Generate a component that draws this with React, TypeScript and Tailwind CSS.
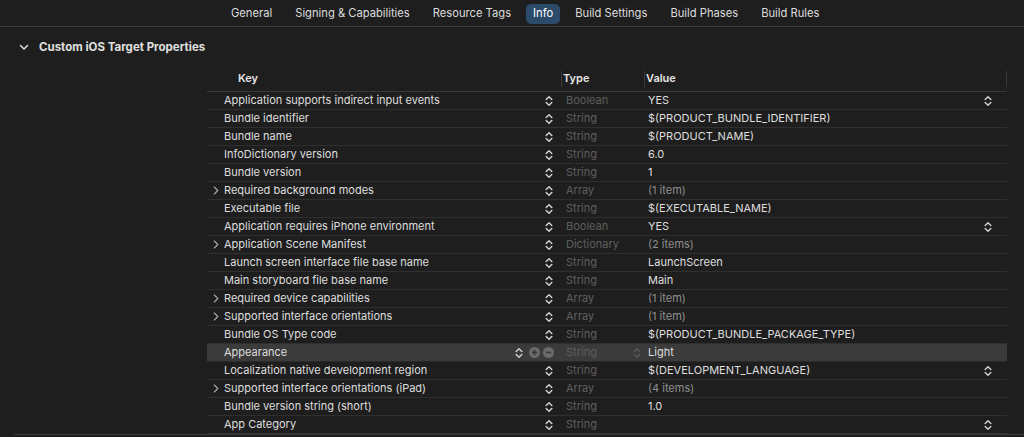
import React from "react";

type Row = {
  key: string;
  type: string;
  value: string;
  expandable?: boolean;
  dimValue?: boolean;
  valueStepper?: boolean;
  selected?: boolean;
};

const rows: Row[] = [
  { key: "Application supports indirect input events", type: "Boolean", value: "YES", valueStepper: true },
  { key: "Bundle identifier", type: "String", value: "$(PRODUCT_BUNDLE_IDENTIFIER)" },
  { key: "Bundle name", type: "String", value: "$(PRODUCT_NAME)" },
  { key: "InfoDictionary version", type: "String", value: "6.0" },
  { key: "Bundle version", type: "String", value: "1" },
  { key: "Required background modes", type: "Array", value: "(1 item)", expandable: true, dimValue: true },
  { key: "Executable file", type: "String", value: "$(EXECUTABLE_NAME)" },
  { key: "Application requires iPhone environment", type: "Boolean", value: "YES", valueStepper: true },
  { key: "Application Scene Manifest", type: "Dictionary", value: "(2 items)", expandable: true, dimValue: true },
  { key: "Launch screen interface file base name", type: "String", value: "LaunchScreen" },
  { key: "Main storyboard file base name", type: "String", value: "Main" },
  { key: "Required device capabilities", type: "Array", value: "(1 item)", expandable: true, dimValue: true },
  { key: "Supported interface orientations", type: "Array", value: "(1 item)", expandable: true, dimValue: true },
  { key: "Bundle OS Type code", type: "String", value: "$(PRODUCT_BUNDLE_PACKAGE_TYPE)" },
  { key: "Appearance", type: "String", value: "Light", selected: true },
  { key: "Localization native development region", type: "String", value: "$(DEVELOPMENT_LANGUAGE)", valueStepper: true },
  { key: "Supported interface orientations (iPad)", type: "Array", value: "(4 items)", expandable: true, dimValue: true },
  { key: "Bundle version string (short)", type: "String", value: "1.0" },
  { key: "App Category", type: "String", value: "", valueStepper: true },
];

const tabs = ["General", "Signing & Capabilities", "Resource Tags", "Info", "Build Settings", "Build Phases", "Build Rules"];

const Stepper = ({ className = "" }: { className?: string }) => (
  <svg width="8" height="12" viewBox="0 0 8 12" className={className} fill="none" stroke="currentColor" strokeWidth="1.5" strokeLinecap="round" strokeLinejoin="round">
    <path d="M1.2 4.5 L4 1.7 L6.8 4.5" />
    <path d="M1.2 7.5 L4 10.3 L6.8 7.5" />
  </svg>
);

const Disclosure = () => (
  <svg width="6" height="9" viewBox="0 0 6 9" fill="none" stroke="#a8a8a8" strokeWidth="1.1" strokeLinecap="round" strokeLinejoin="round">
    <path d="M1.3 1 L4.8 4.5 L1.3 8" />
  </svg>
);

const RoundBtn = ({ plus }: { plus?: boolean }) => (
  <svg width="11" height="11" viewBox="0 0 11 11">
    <circle cx="5.5" cy="5.5" r="5.5" fill="#6b6b6b" />
    <path d="M2.8 5.5 H8.2" stroke="#3a3a3a" strokeWidth="1.6" />
    {plus && <path d="M5.5 2.8 V8.2" stroke="#3a3a3a" strokeWidth="1.6" />}
  </svg>
);

export default function App() {
  return (
    <div
      className="w-[1024px] h-[437px] overflow-hidden bg-[#1e1e1e] text-[#dedede] text-[11px]"
      style={{ fontFamily: "Inter, 'Noto Sans', sans-serif" }}
    >
      {/* tab bar */}
      <div className="h-[27px] border-b border-[#3b3b3b] flex items-center pl-[219.5px] pt-[1px]">
        {tabs.map((t) =>
          t === "Info" ? (
            <div key={t} className="mx-[3.5px] h-[20px] px-[7px] rounded-[5px] bg-[#2c4b6b] text-white flex items-center text-[11.2px]">
              {t}
            </div>
          ) : (
            <div key={t} className="h-[20px] px-[11.5px] flex items-center text-[11.2px] text-[#dcdcdc]">
              {t}
            </div>
          )
        )}
      </div>

      {/* section */}
      <div className="ml-[14px] border-b border-[#3a3a3a]">
        <div className="h-[38px] flex items-center pl-[5px] pt-[3px]">
          <svg width="10" height="7" viewBox="0 0 10 7" fill="none" stroke="#d8d8d8" strokeWidth="1.6" strokeLinecap="round" strokeLinejoin="round">
            <path d="M1.5 1.5 L5 5 L8.5 1.5" />
          </svg>
          <span className="ml-[10px] font-bold text-[11.5px] text-[#e0e0e0]">Custom iOS Target Properties</span>
        </div>

        <div className="ml-[193px] w-[800px]">
          {/* header */}
          <div className="h-[27px] grid grid-cols-[354px_83px_363px] items-center border-b border-[#3a3a3a] font-semibold text-[#e6e6e6] pt-[1px]">
            <div className="pl-[31px]">Key</div>
            <div className="h-[16px] border-l border-[#3a3a3a] pl-[1px] flex items-center">Type</div>
            <div className="h-[16px] border-l border-r border-[#3a3a3a] pl-[1px] flex items-center">Value</div>
          </div>

          {rows.map((r) => (
            <div
              key={r.key}
              className={
                "h-[18px] grid grid-cols-[354px_83px_363px] items-center border-b " +
                (r.selected ? "bg-[#3b3b3b] border-[#2a2a2a]" : "border-[#2f2f2f]")
              }
            >
              <div className="flex items-center h-full">
                <div className="w-[17px] flex justify-start pl-[6px]">{r.expandable && <Disclosure />}</div>
                <div className="flex-1 truncate">{r.key}</div>
                {r.selected ? (
                  <div className="flex items-center gap-[3px] pr-[7px]">
                    <Stepper className="text-[#cfcfcf] mr-[3px]" />
                    <RoundBtn plus />
                    <RoundBtn />
                  </div>
                ) : (
                  <Stepper className="text-[#cfcfcf] mr-[8px]" />
                )}
              </div>
              <div className="flex items-center h-full pl-[5px] text-[#5e5e5e]">
                <span className="flex-1">{r.type}</span>
                {r.selected && <Stepper className="text-[#5a5a5a] mr-[3px]" />}
              </div>
              <div className="flex items-center h-full pl-[4px]">
                <span className={"flex-1 " + (r.dimValue ? "text-[#8e8e8e]" : "text-[#dedede]")}>{r.value}</span>
                {r.valueStepper && <Stepper className="text-[#cfcfcf] mr-[15px]" />}
              </div>
            </div>
          ))}
        </div>
      </div>
    </div>
  );
}
